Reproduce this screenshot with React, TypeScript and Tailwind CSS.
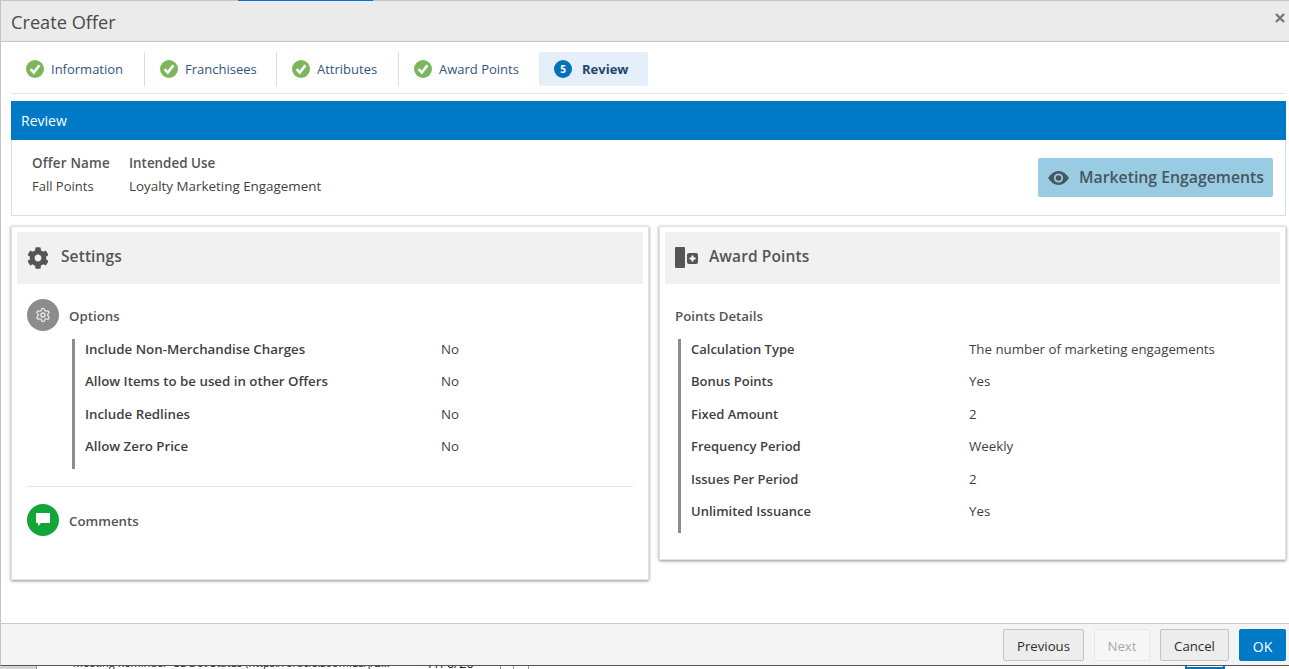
import { Settings } from "lucide-react";
import { FaCog } from "react-icons/fa";

const font = "font-['Open_Sans','Noto_Sans',sans-serif]";

function CheckBadge() {
    return (
        <svg width="18" height="18" viewBox="0 0 18 18" className="shrink-0">
            <circle cx="9" cy="9" r="9" fill="#7cb65c" />
            <path d="M4.6 9.2 L7.8 12.6 L13.4 5.2" fill="none" stroke="#fff" strokeWidth="2.6" />
        </svg>
    );
}

function Tab({ label, className }: { label: string; className: string }) {
    return (
        <div className={`flex h-[34px] items-center gap-[7px] ${className}`}>
            <CheckBadge />
            <span className="mt-px text-[13px] text-[#33557f]">{label}</span>
        </div>
    );
}

function Row({ label, value, labelClass, valueClass }: { label: string; value: string; labelClass: string; valueClass: string }) {
    return (
        <div className="flex h-[32.4px] items-start text-[13.3px] leading-[20px]">
            <span className={`font-semibold text-[#3f3f3f] ${labelClass}`}>{label}</span>
            <span className={`text-[#3f3f3f] ${valueClass}`}>{value}</span>
        </div>
    );
}

function CardHeading({ icon, title }: { icon: React.ReactNode; title: string }) {
    return (
        <div className="flex h-[52px] items-center bg-[#f1f1f1] pl-[10px]">
            {icon}
            <span className="mb-[3px] text-[15.5px] font-semibold tracking-[0.1px] text-[#555]">{title}</span>
        </div>
    );
}

const optionRows = [
    ["Include Non-Merchandise Charges", "No"],
    ["Allow Items to be used in other Offers", "No"],
    ["Include Redlines", "No"],
    ["Allow Zero Price", "No"],
];

const pointRows = [
    ["Calculation Type", "The number of marketing engagements"],
    ["Bonus Points", "Yes"],
    ["Fixed Amount", "2"],
    ["Frequency Period", "Weekly"],
    ["Issues Per Period", "2"],
    ["Unlimited Issuance", "Yes"],
];

export default function App() {
    return (
        <div className={`${font} relative flex h-[669px] w-[1289px] flex-col overflow-hidden bg-white`}>
            <div className="absolute left-[238px] top-0 h-px w-[135px] bg-[#0572ce]" />

            <div className="flex h-[42px] items-center justify-between border border-[#c4c4c4] border-r-0 bg-[#ebebeb] pl-[10px] pr-[4px]">
                <span className="mt-[3px] text-[18.2px] text-[#4a4a4a]">Create Offer</span>
                <svg width="10" height="10" viewBox="0 0 10 10" className="mb-[6px]">
                    <path d="M1 1 L9 9 M9 1 L1 9" stroke="#777" strokeWidth="2.4" />
                </svg>
            </div>

            <div className="flex min-h-0 flex-1 flex-col border-l border-[#c4c4c4] pl-[10px] pr-[3px]">
                <div className="flex h-[52px] items-center border-b border-[#e5e5e5] pl-[15px] pt-[3px]">
                    <Tab label="Information" className="mr-[15px] w-[119px] border-r border-[#d6dfe6]" />
                    <Tab label="Franchisees" className="mr-[15px] w-[117px] border-r border-[#d6dfe6]" />
                    <Tab label="Attributes" className="mr-[15px] w-[107px] border-r border-[#d6dfe6]" />
                    <Tab label="Award Points" className="w-[125px]" />
                    <div className="flex h-[34px] w-[109px] items-center gap-[10px] rounded-[2px] bg-[#e4eff9] pl-[15px]">
                        <span className="flex size-[18px] items-center justify-center rounded-full bg-[#0572b8] text-[10px] font-bold text-white">5</span>
                        <span className="mt-px text-[13px] font-bold text-[#23466e]">Review</span>
                    </div>
                </div>

                <div className="mt-[7px] flex h-[39px] items-center bg-[#007ac7] pl-[10px] text-[14px] text-white">Review</div>

                <div className="flex h-[76px] items-center justify-between border border-t-0 border-[#d6dfe6] pl-[20px] pr-[12px]">
                    <div className="mb-[5px] flex gap-[20px] text-[13.4px] leading-[23px] text-[#3f3f3f]">
                        <div className="w-[77px]">
                            <div className="whitespace-nowrap font-semibold tracking-[0.2px] text-[#555]">Offer Name</div>
                            <div className="text-[13px]">Fall Points</div>
                        </div>
                        <div>
                            <div className="font-semibold text-[#555]">Intended Use</div>
                            <div>Loyalty Marketing Engagement</div>
                        </div>
                    </div>
                    <div className="flex h-[39px] w-[235px] items-center gap-[10px] rounded-[2px] bg-[#99cbe2] pl-[10px] text-[15.8px] font-semibold text-[#47565f]">
                        <svg width="21" height="14" viewBox="0 0 21 14">
                            <path d="M0 7 C3 2.5 6.5 0 10.5 0 C14.5 0 18 2.5 21 7 C18 11.5 14.5 14 10.5 14 C6.5 14 3 11.5 0 7 Z" fill="#47565f" />
                            <circle cx="10.5" cy="7" r="4.6" fill="#99cbe2" />
                            <circle cx="10.5" cy="7" r="2.8" fill="#47565f" />
                        </svg>
                        Marketing Engagements
                    </div>
                </div>

                <div className="mt-[10px] flex items-start gap-[10px]">
                    <div className="h-[354px] w-[638px] border border-[#e3e3e3] p-[5px] shadow-[0_1px_3px_rgba(0,0,0,0.45)]">
                        <CardHeading title="Settings" icon={<FaCog size={22} className="mr-[12px] text-[#555]" />} />
                        <div className="px-[10px]">
                            <div className="mt-[15px] flex h-[32px] items-center gap-[10px]">
                                <span className="flex size-[32px] items-center justify-center rounded-full bg-[#8c8c8c]">
                                    <Settings size={16} className="text-[#e8e8e8]" />
                                </span>
                                <span className="mt-[3px] text-[13.3px] font-semibold text-[#555]">Options</span>
                            </div>
                            <div className="ml-[45px] mt-[8px] border-l-[3px] border-[#8c8c8c] pl-[10px]">
                                {optionRows.map(([label, value]) => (
                                    <Row key={label} label={label} value={value} labelClass="" valueClass="ml-auto w-[192px]" />
                                ))}
                            </div>
                            <div className="mt-[17px] border-t border-[#e5e5e5]" />
                            <div className="mt-[17px] flex h-[32px] items-center gap-[10px]">
                                <span className="flex size-[32px] items-center justify-center rounded-full bg-[#13a538]">
                                    <svg width="16" height="15" viewBox="0 0 16 15">
                                        <path d="M1 1 H15 V11 H6 L3 14 V11 H1 Z" fill="#fff" />
                                    </svg>
                                </span>
                                <span className="mt-[4px] text-[13.3px] font-semibold text-[#555]">Comments</span>
                            </div>
                        </div>
                    </div>

                    <div className="h-[334px] w-[627px] border border-[#e3e3e3] p-[5px] shadow-[0_1px_3px_rgba(0,0,0,0.45)]">
                        <CardHeading
                            title="Award Points"
                            icon={
                                <svg width="24" height="22" viewBox="0 0 24 22" className="mr-[10px]">
                                    <rect x="0" y="0" width="10" height="21" rx="1" fill="#555" />
                                    <rect x="12" y="6" width="11" height="11" rx="2" fill="#555" />
                                    <path d="M17.5 8.5 V14.5 M14.5 11.5 H20.5" stroke="#fff" strokeWidth="2" />
                                </svg>
                            }
                        />
                        <div className="px-[10px]">
                            <div className="mt-[15px] flex h-[32px] items-center pt-[4px] text-[13.3px] font-semibold text-[#555]">Points Details</div>
                            <div className="ml-[3px] mt-[8px] border-l-[3px] border-[#8c8c8c] pl-[10px]">
                                {pointRows.map(([label, value]) => (
                                    <Row key={label} label={label} value={value} labelClass="text-[13px]" valueClass="ml-auto w-[301px]" />
                                ))}
                            </div>
                        </div>
                    </div>
                </div>
            </div>

            <div className="flex h-[43px] items-center justify-end gap-[10px] border border-r-0 border-t-[#c9c9c9] border-b-[#555] border-l-[#c4c4c4] bg-[#f4f4f4] pr-[3px] pt-px text-[13.2px]">
                <button className="h-[32px] w-[81px] rounded-[2px] border border-[#c4c4c4] bg-[#ededed] pt-[3px] text-[#2b2b2b]">Previous</button>
                <button className="h-[32px] w-[56px] rounded-[2px] border border-[#e8e8e8] bg-[#f7f7f7] pt-[3px] text-[#a9a9a9]">Next</button>
                <button className="h-[32px] w-[69px] rounded-[2px] border border-[#c4c4c4] bg-[#ededed] pt-[3px] text-[#2b2b2b]">Cancel</button>
                <button className="h-[32px] w-[47px] rounded-[2px] bg-[#007ac7] pt-[2px] text-[14px] text-white">OK</button>
            </div>

            {/* page behind the dialog, only its last 3px show */}
            <div className="relative h-[3px] overflow-hidden bg-white text-[11px] leading-[20px] text-[#222]">
                <div className="absolute inset-y-0 left-0 w-[37px] border-r border-[#999] bg-[#d4d4d4]" />
                <span className="absolute left-[73px] top-[-13px] whitespace-nowrap">Meeting Reminder- SE Dot Status (https://oracle.zoom.us/j/2...</span>
                <span className="absolute left-[428px] top-[-13px] whitespace-nowrap text-[13px]">Fri 6/26</span>
                <div className="absolute inset-y-0 left-[500px] w-px bg-[#999]" />
                <div className="absolute inset-y-0 left-[513px] w-px bg-[#999]" />
                <div className="absolute inset-y-0 left-[528px] w-px bg-[#999]" />
                <div className="absolute left-[1185px] top-0 h-[3px] w-[40px] border-x-2 border-b-2 border-[#0572b8]" />
            </div>
        </div>
    );
}
